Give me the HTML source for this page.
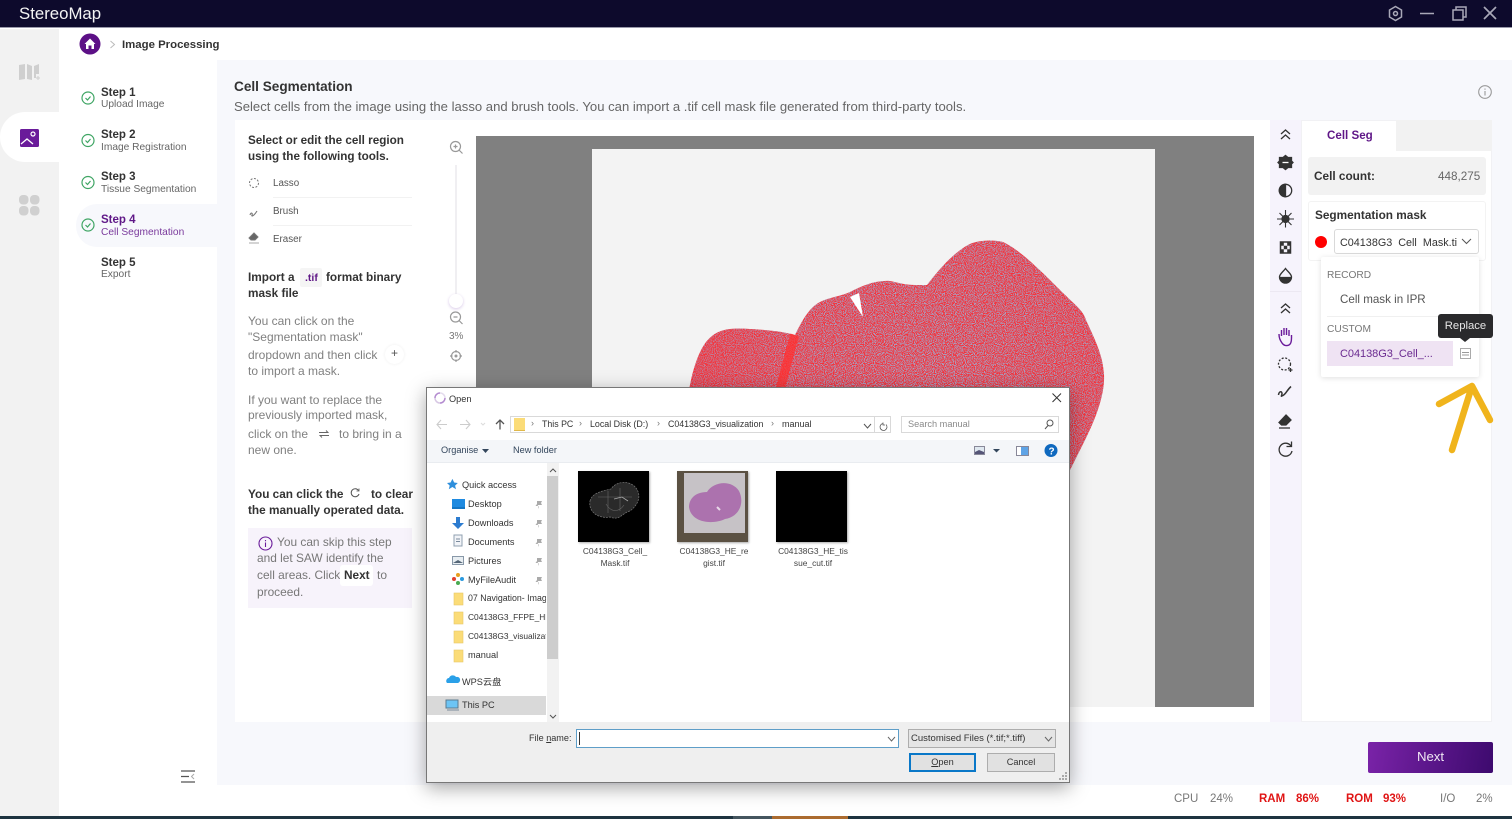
<!DOCTYPE html>
<html><head><meta charset="utf-8"><style>
*{box-sizing:border-box;margin:0;padding:0}
html,body{width:1512px;height:819px;overflow:hidden;background:#fff;font-family:"Liberation Sans","Noto Sans CJK SC",sans-serif;color:#333}
.a{position:absolute;white-space:nowrap}
svg{position:absolute;overflow:visible}
.b{font-weight:bold;color:#333}
.g{color:#808080}
.step{font-size:11.5px;font-weight:bold;color:#333}
.sub{font-size:10.2px;color:#666}
.d{font-size:9.2px;color:#333;margin-top:1px}
.nav{font-size:9px;color:#333}
.t{font-size:11.8px;font-weight:bold;color:#333}
.p{font-size:12px;color:#808080}
</style></head><body>
<!-- title bar -->
<div class="a" style="left:0;top:0;width:1512px;height:28px;background:#0d0a2c;border-bottom:1px solid #99a"></div>
<div class="a" style="left:19px;top:4px;font-size:16.800px;color:#f4f4f4">StereoMap</div>
<svg style="left:1388px;top:5px" width="115" height="17" fill="none" stroke="#a9a8b8" stroke-width="1.5">
<path d="M7.500 1.500 13.500 5v7l-6 3.500L1.500 12V5z"/><circle cx="7.500" cy="8.500" r="2"/>
<path d="M32 8.500H46M65 5V15H75V5zM68 5V2H78V12H75"/><path d="M96 2 108 14M108 2 96 14" stroke-width="1.700"/></svg>
<!-- sidebar -->
<div class="a" style="left:0;top:29px;width:59px;height:787px;background:#f2f2f2"></div>
<div class="a" style="left:0;top:112px;width:59px;height:50px;background:#fff;border-radius:25px 0 0 25px"></div>
<svg style="left:18px;top:63px" width="24" height="18"><path d="M1 2 7 1V16L1 17zM9 1 14 3V17L9 16zM16 3 21 1V11H18V15H16z" fill="#cfcfcf"/><path d="M20 13V17M18 15H22" stroke="#cfcfcf"/></svg>
<svg style="left:20px;top:129px" width="19" height="19"><rect width="19" height="18" rx="1.500" fill="#6a1b9a"/><circle cx="13" cy="5" r="2" fill="none" stroke="#fff" stroke-width="1.200"/><path d="M1 15 7 10 13 15" fill="none" stroke="#fff" stroke-width="1.300"/></svg>
<svg style="left:19px;top:195px" width="21" height="21" fill="#d0d0d0"><rect width="9.500" height="9.500" rx="4"/><rect x="11" width="9.500" height="9.500" rx="4"/><rect y="11" width="9.500" height="9.500" rx="4"/><rect x="11" y="11" width="9.500" height="9.500" rx="4"/></svg>
<!-- breadcrumb -->
<svg style="left:79px;top:33px" width="22" height="22"><circle cx="11" cy="11" r="10.500" fill="#5c1086"/><path d="M5.500 11 11 5.500 16.500 11H15V16H12.500V12.500H9.500V16H7V11z" fill="#fff"/></svg>
<svg style="left:109px;top:40px" width="8" height="9"><path d="M1.500 1 5.500 4.500 1.500 8" stroke="#bbb" fill="none"/></svg>
<div class="a b" style="left:122px;top:39px;font-size:11.400px;color:#333">Image Processing</div>
<!-- main bg -->
<div class="a" style="left:217px;top:60px;width:1295px;height:725px;background:#f7f8fc"></div>
<!-- steps -->
<div class="a" style="left:76px;top:204px;width:141px;height:43px;background:#f7f8fc;border-radius:21px 0 0 21px"></div>
<svg style="left:81px;top:90px" width="14" height="142" fill="none" stroke="#3fa564" stroke-width="1.200">
<circle cx="7" cy="8" r="6"/><path d="M4.500 8 6.500 10 9.500 6.500"/>
<circle cx="7" cy="50.500" r="6"/><path d="M4.500 50.500 6.500 52.500 9.500 49"/>
<circle cx="7" cy="92.500" r="6"/><path d="M4.500 92.500 6.500 94.500 9.500 91"/>
<circle cx="7" cy="135" r="6"/><path d="M4.500 135 6.500 137 9.500 133.500"/></svg>
<div class="a step" style="left:101px;top:87px">Step 1</div><div class="a sub" style="left:101px;top:99px">Upload Image</div>
<div class="a step" style="left:101px;top:129px">Step 2</div><div class="a sub" style="left:101px;top:142px">Image Registration</div>
<div class="a step" style="left:101px;top:171px">Step 3</div><div class="a sub" style="left:101px;top:184px">Tissue Segmentation</div>
<div class="a step" style="left:101px;top:214px;color:#5f1787">Step 4</div><div class="a sub" style="left:101px;top:227px;color:#7a3a9c">Cell Segmentation</div>
<div class="a step" style="left:101px;top:257px">Step 5</div><div class="a sub" style="left:101px;top:269px">Export</div>
<svg style="left:180px;top:770px" width="15" height="13"><path d="M1 1H15M1 6.500H9M1 12H15" stroke="#555" stroke-width="1.300"/><path d="M14 4 11.500 6.500 14 9" stroke="#aaa" fill="none"/></svg>
<!-- heading -->
<div class="a b" style="left:234px;top:79px;font-size:13.600px;color:#333">Cell Segmentation</div>
<div class="a" style="left:234px;top:99px;font-size:13.100px;color:#666">Select cells from the image using the lasso and brush tools. You can import a .tif cell mask file generated from third-party tools.</div>
<svg style="left:1478px;top:85px" width="14" height="14" fill="none" stroke="#999" stroke-width="1.100"><circle cx="7" cy="7" r="6.300"/><path d="M7 6V10.500M7 3.500V4.800"/></svg>
<!-- left card -->
<div class="a" style="left:235px;top:120px;width:189px;height:602px;background:#fff"></div>
<div class="a t" style="left:248px;top:133px;line-height:16px;font-size:11.700px">Select or edit the cell region<br>using the following tools.</div>
<svg style="left:248px;top:177px" width="13" height="68" fill="none" stroke="#777" stroke-width="1">
<circle cx="6" cy="6" r="4.500" stroke-dasharray="2 1.500"/><path d="M2 38C3 35 5 36 4 38S6 39 9 34" stroke-width="1.100"/><path d="M6 56 10 60 7 63H3L1 61z" fill="#666"/><path d="M1 66H11" stroke="#aaa"/></svg>
<div class="a" style="left:273px;top:178px;font-size:9.800px;color:#555">Lasso</div>
<div class="a" style="left:273px;top:206px;font-size:9.800px;color:#555">Brush</div>
<div class="a" style="left:273px;top:234px;font-size:9.800px;color:#555">Eraser</div>
<div class="a" style="left:273px;top:197px;width:139px;height:1px;background:#f2f2f2"></div>
<div class="a" style="left:273px;top:225px;width:139px;height:1px;background:#f2f2f2"></div>
<div class="a t" style="left:248px;top:270px">Import a</div>
<div class="a" style="left:300px;top:268px;width:22px;height:19px;background:#f5f5f5;border-radius:2px"></div>
<div class="a b" style="left:305px;top:272px;font-size:10.500px;color:#5f1787">.tif</div>
<div class="a t" style="left:326px;top:270px">format binary</div>
<div class="a t" style="left:248px;top:286px">mask file</div>
<div class="a p" style="left:248px;top:314px">You can click on the</div>
<div class="a p" style="left:248px;top:330px">"Segmentation mask"</div>
<div class="a p" style="left:248px;top:348px">dropdown and then click</div>
<div class="a" style="left:385px;top:345px;width:19px;height:19px;border-radius:50%;background:#fff;box-shadow:0 0 3px #eee;text-align:center;font-size:12px;line-height:17px;color:#555">+</div>
<div class="a p" style="left:248px;top:364px">to import a mask.</div>
<div class="a p" style="left:248px;top:393px">If you want to replace the</div>
<div class="a p" style="left:248px;top:408px">previously imported mask,</div>
<div class="a p" style="left:248px;top:427px">click on the</div>
<svg style="left:319px;top:430px" width="10" height="8"><path d="M0 2.500H9L7 .5M10 5.500H1L3 7.500" stroke="#666" fill="none" stroke-width=".9"/></svg>
<div class="a p" style="left:339px;top:427px">to bring in a</div>
<div class="a p" style="left:248px;top:443px">new one.</div>
<div class="a t" style="left:248px;top:487px">You can click the</div>
<svg style="left:350px;top:488px" width="10" height="10" fill="none" stroke="#555"><path d="M8.500 2.500A4 4 0 1 0 9 6"/><path d="M9 .5V3H6.500" stroke-width=".8"/></svg>
<div class="a t" style="left:371px;top:487px">to clear</div>
<div class="a t" style="left:248px;top:503px">the manually operated data.</div>
<div class="a" style="left:248px;top:528px;width:164px;height:80px;background:#f7f3fb"></div>
<svg style="left:258px;top:536px" width="15" height="15" fill="none" stroke="#6a1b9a" stroke-width="1.100"><circle cx="7.500" cy="7.500" r="6.500"/><path d="M7.500 6.500V11M7.500 4V5.300"/></svg>
<div class="a p" style="left:277px;top:535px;color:#777;font-size:11.900px">You can skip this step</div>
<div class="a p" style="left:257px;top:551px;color:#777;font-size:11.900px">and let SAW identify the</div>
<div class="a p" style="left:257px;top:568px;color:#777;font-size:11.900px">cell areas. Click</div>
<div class="a" style="left:340px;top:565px;width:33px;height:21px;background:#fff;border-radius:3px"></div>
<div class="a t" style="left:344px;top:568px">Next</div>
<div class="a p" style="left:377px;top:568px;color:#777">to</div>
<div class="a p" style="left:257px;top:585px;color:#777;font-size:11.900px">proceed.</div>
<!-- viewer -->
<div class="a" style="left:424px;top:120px;width:846px;height:602px;background:#fff"></div>
<svg style="left:449px;top:140px" width="16" height="225" fill="none" stroke="#999" stroke-width="1.200">
<circle cx="6.500" cy="6.500" r="5"/><path d="M10 10 13.500 13.500M4.500 6.500H8.500M6.500 4.500V8.500"/>
<path d="M7 25V160" stroke="#f0eff2" stroke-width="2"/>
<circle cx="6.500" cy="177" r="5"/><path d="M10 180.500 13.500 184M4.500 177H8.500"/>
<circle cx="7" cy="216" r="4.500"/><circle cx="7" cy="216" r="1.500" fill="#999" stroke="none"/><path d="M7 210V212.500M7 219.500V222M1 216H3.500M10.500 216H13"/></svg>
<div class="a" style="left:449px;top:294px;width:14px;height:14px;border-radius:50%;background:#fff;box-shadow:0 1px 3px #d8c8e8"></div>
<div class="a" style="left:449px;top:331px;font-size:10px;color:#777">3%</div>
<div class="a" style="left:476px;top:136px;width:778px;height:571px;background:#808080"></div>
<div class="a" style="left:592px;top:149px;width:563px;height:558px;background:#f3f3f3"></div>
<svg style="left:0;top:0" width="1512" height="819">
<defs>
<filter id="n" x="0" y="0" width="100%" height="100%"><feTurbulence type="fractalNoise" baseFrequency="1.100" numOctaves="1" seed="7"/><feColorMatrix values="0 0 0 0 0.36 0 0 0 0 0.38 0 0 0 0 0.58 0 0 0 10 -4.700"/><feComposite in2="SourceGraphic" operator="in"/></filter>
<radialGradient id="m" gradientUnits="userSpaceOnUse" cx="930" cy="370" r="240"><stop offset="0" stop-color="#fff"/><stop offset=".6" stop-color="#ddd"/><stop offset="1" stop-color="#999"/></radialGradient>
<mask id="mk"><rect width="1512" height="819" fill="url(#m)"/></mask>
<path id="tp" d="M689 390C693 368 700 345 712 336 722 328 735 328 750 329 770 330 785 332 795 335 800 325 808 308 820 302 830 297 842 296 850 292 862 286 875 280 890 281 900 283 905 285 915 285L927 285C935 275 950 255 968 245 975 241 990 239 1003 242 1020 250 1040 270 1060 290 1075 305 1083 310 1086 320 1095 340 1103 355 1104 375 1105 395 1095 420 1085 440L1070 470H689Z"/>
</defs>
<use href="#tp" fill="#f5333b"/>
<g mask="url(#mk)"><use href="#tp" fill="#000" filter="url(#n)"/></g>
<path d="M795 335C790 350 785 370 780 390" stroke="#ff3030" stroke-width="9" fill="none" opacity=".75"/>
<path d="M850 297 859 293 863 317z" fill="#fff"/>
</svg>
<!-- toolbar -->
<div class="a" style="left:1270px;top:120px;width:31px;height:602px;background:#f6f3fc"></div>
<div class="a" style="left:1270px;top:291px;width:31px;height:1px;background:#ece8f2"></div>
<svg style="left:1276px;top:126px" width="20" height="335" fill="none" stroke="#333" stroke-width="1.300">
<path d="M5 8 9.500 4 14 8M5 13 9.500 9 14 13"/>
<path d="M9.500 29.500 12 31.500H15.500V35L17 36.500 15.500 38V41.500H12L9.500 43.500 7 41.500H3.500V38L2 36.500 3.500 35V31.500H7z" fill="#333"/><path d="M6.500 36.500H12.500" stroke="#fff"/>
<circle cx="9.500" cy="64.500" r="6.200"/><path d="M9.500 58.300A6.200 6.200 0 0 0 9.500 70.700z" fill="#333"/>
<circle cx="9.500" cy="93" r="3.500" fill="#333"/><path d="M9.500 84V101.500M1 93H18M3.500 87 15.500 99M15.500 87 3.500 99" stroke-width="1.100"/>
<path d="M4.500 116H14.500V127H4.500z" stroke-width="1.500"/><path d="M4.500 116h3.300v3.700H4.500zM11.200 116h3.300v3.700h-3.300zM7.800 119.700h3.400v3.600H7.800zM4.500 123.300h3.300V127H4.500zM11.200 123.300h3.300V127h-3.300z" fill="#333" stroke="none"/>
<path d="M9.500 142.500C12 146 15.500 148 15.500 151A6 6 0 0 1 3.500 151C3.500 148 7 146 9.500 142.500z"/><path d="M4 151.500H15A5.500 5.500 0 0 1 4 151.500z" fill="#333"/>
<path d="M5 182 9.500 178 14 182M5 187 9.500 183 14 187"/>
<path d="M5.500 210V204M8 209V202M10.500 209V202M13 210V204M3 208C3 212 4 214 6 217 8 220 11 220 13 219 15 218 15.500 215 15.500 212V209" stroke="#6a1b9a" stroke-width="1.400"/>
<circle cx="8.500" cy="238" r="6" stroke-dasharray="2 1.600"/><path d="M14.500 242V246M12.500 244H16.500"/>
<path d="M2.500 269C3 265 6 265 6 267.500S4 271 7 269.500 11 264 15 260.500" stroke-width="1.500"/>
<path d="M10 289 15 294 10 299H5.500L3 296.500z" fill="#333"/><path d="M3 302H14"/>
<path d="M15 320A6.500 6.500 0 1 0 16 325"/><path d="M15.500 315.500V320.500H10.500"/>
</svg>
<!-- right panel -->
<div class="a" style="left:1301px;top:120px;width:191px;height:602px;background:#fff;border:1px solid #f1f1f4"></div>
<div class="a" style="left:1396px;top:120px;width:96px;height:31px;background:#f2f2f2"></div>
<div class="a b" style="left:1327px;top:129px;font-size:11.600px;color:#5f1787">Cell Seg</div>
<div class="a" style="left:1308px;top:157px;width:178px;height:38px;background:#f2f2f2;border-radius:3px"></div>
<div class="a t" style="left:1314px;top:169px">Cell count:</div>
<div class="a" style="left:1438px;top:170px;font-size:11.700px;color:#666">448,275</div>
<div class="a" style="left:1308px;top:201px;width:178px;height:60px;background:#fff;border:1px solid #f3f3f3;border-radius:3px"></div>
<div class="a t" style="left:1315px;top:208px">Segmentation mask</div>
<div class="a" style="left:1315px;top:236px;width:12px;height:12px;border-radius:50%;background:#f00"></div>
<div class="a" style="left:1334px;top:229px;width:145px;height:25px;background:#fff;border:1px solid #d9d9d9;border-radius:3px"></div>
<div class="a" style="left:1340px;top:237px;font-size:10.800px;color:#333;width:117px;overflow:hidden;word-spacing:3px">C04138G3 Cell Mask.tif</div>
<svg style="left:1461px;top:238px" width="11" height="7"><path d="M1 1 5.500 5.500 10 1" stroke="#555" fill="none"/></svg>
<div class="a" style="left:1321px;top:257px;width:158px;height:120px;background:#fff;box-shadow:0 1px 6px rgba(0,0,0,.13);border-radius:2px"></div>
<div class="a" style="left:1327px;top:270px;font-size:10.200px;color:#777">RECORD</div>
<div class="a" style="left:1340px;top:293px;font-size:11.600px;color:#555">Cell mask in IPR</div>
<div class="a" style="left:1327px;top:316px;width:142px;height:1px;background:#f0f0f0"></div>
<div class="a" style="left:1327px;top:324px;font-size:10.200px;color:#777">CUSTOM</div>
<div class="a" style="left:1327px;top:341px;width:126px;height:25px;background:#efe3f3"></div>
<div class="a" style="left:1340px;top:348px;font-size:11px;letter-spacing:-.05px;color:#6a2a90">C04138G3_Cell_...</div>
<div class="a" style="left:1460px;top:348px;width:11px;height:11px;border:1px solid #aaa"></div>
<svg style="left:1462px;top:351px" width="7" height="6"><path d="M0 1.500H7M0 4H7" stroke="#999"/></svg>
<div class="a" style="left:1438px;top:314px;width:55px;height:24px;background:#2a2a2c;border-radius:3px;color:#e6e6e6;font-size:11.300px;line-height:24px;text-align:center">Replace</div>
<svg style="left:1460px;top:338px" width="10" height="5"><path d="M0 0H10L5 4z" fill="#2a2a2c"/></svg>
<svg style="left:0;top:0" width="1512" height="819" fill="none" stroke="#f0b41c" stroke-width="6.500" stroke-linecap="round" stroke-linejoin="round"><path d="M1439 404 1472 386 1490 420M1472 386 1452 450"/></svg>
<!-- Next & status -->
<div class="a" style="left:1368px;top:742px;width:125px;height:31px;background:linear-gradient(100deg,#7a23a8,#3d0a6e);border-radius:2px;color:#f0e8f4;font-size:13.200px;line-height:30px;text-align:center">Next</div>
<div class="a" style="left:1174px;top:793px;font-size:11.500px;color:#777">CPU</div>
<div class="a" style="left:1210px;top:793px;font-size:11.500px;color:#777">24%</div>
<div class="a b" style="left:1259px;top:793px;font-size:11.500px;color:#e01515">RAM</div>
<div class="a b" style="left:1296px;top:793px;font-size:11.500px;color:#e01515">86%</div>
<div class="a b" style="left:1346px;top:793px;font-size:11.500px;color:#e01515">ROM</div>
<div class="a b" style="left:1383px;top:793px;font-size:11.500px;color:#e01515">93%</div>
<div class="a" style="left:1440px;top:793px;font-size:11.500px;color:#777">I/O</div>
<div class="a" style="left:1476px;top:793px;font-size:11.500px;color:#777">2%</div>
<!-- taskbar strip -->
<div class="a" style="left:0;top:816px;width:1512px;height:3px;background:#1e3440"></div>
<div class="a" style="left:733px;top:816px;width:39px;height:3px;background:#45565f"></div>
<div class="a" style="left:772px;top:816px;width:76px;height:3px;background:#ac6c30"></div>
<!-- dialog -->
<div class="a" style="left:426px;top:387px;width:644px;height:396px;background:#fff;border:1px solid #777;box-shadow:0 5px 18px rgba(0,0,0,.35)"></div>
<svg style="left:434px;top:392px" width="12" height="12" fill="none" stroke-width="1.500"><path d="M6 1A5 5 0 0 0 1 6" stroke="#b48cd0"/><path d="M1 6A5 5 0 0 0 6 11" stroke="#d8c8e4"/><path d="M6 11A5 5 0 0 0 11 6" stroke="#b48cd0"/><path d="M11 6A5 5 0 0 0 6 1" stroke="#e4dced"/></svg>
<div class="a d" style="left:449px;top:393px">Open</div>
<svg style="left:1052px;top:393px" width="10" height="10"><path d="M.5 .5 9 9M9 .5 .5 9" stroke="#333"/></svg>
<svg style="left:436px;top:418px" width="70" height="13" fill="none" stroke="#ccc" stroke-width="1.100"><path d="M1 6.500H11M5 2 1 6.500 5 11M24 6.500H34M30 2 34 6.500 30 11"/><path d="M45 5 47 7 49 5" stroke="#ddd"/><path d="M64 11.500V2.500M60 6 64 2 68 6" stroke="#555" stroke-width="1.300"/></svg>
<div class="a" style="left:510px;top:416px;width:365px;height:17px;background:#fff;border:1px solid #d9d9d9"></div>
<div class="a" style="left:875px;top:416px;width:16px;height:17px;background:#fff;border:1px solid #d9d9d9;border-left:0"></div>
<div class="a" style="left:514px;top:418px;width:11px;height:13px;background:#fbdc78;border-bottom:1px solid #e0b84a"></div>
<div class="a nav" style="left:531px;top:418px;color:#777">›</div>
<div class="a nav" style="left:542px;top:419px;font-size:8.800px">This PC</div>
<div class="a nav" style="left:579px;top:418px;color:#777">›</div>
<div class="a nav" style="left:590px;top:419px;font-size:8.900px">Local Disk (D:)</div>
<div class="a nav" style="left:657px;top:418px;color:#777">›</div>
<div class="a nav" style="left:668px;top:419px;font-size:8.800px">C04138G3_visualization</div>
<div class="a nav" style="left:771px;top:418px;color:#777">›</div>
<div class="a nav" style="left:782px;top:419px">manual</div>
<svg style="left:863px;top:422px" width="26" height="10" fill="none" stroke="#555"><path d="M1 2 4.500 6 8 2"/><path d="M20 1.500A3.500 3.500 0 1 0 23 2.500M20 .5V3H22" stroke-width=".8"/></svg>
<div class="a" style="left:901px;top:416px;width:158px;height:17px;background:#fff;border:1px solid #d9d9d9"></div>
<div class="a" style="left:908px;top:419px;font-size:9.200px;color:#8a8a8a">Search manual</div>
<svg style="left:1044px;top:419px" width="10" height="11" fill="none" stroke="#555"><circle cx="6" cy="4" r="3"/><path d="M4 6.500 1 10"/></svg>
<div class="a" style="left:427px;top:440px;width:642px;height:23px;background:#f4f6f9;border-bottom:1px solid #e9ecf0"></div>
<div class="a" style="left:441px;top:445px;font-size:9.200px;color:#33465c">Organise</div>
<svg style="left:482px;top:449px" width="7" height="4"><path d="M0 0H7L3.500 4z" fill="#33465c"/></svg>
<div class="a" style="left:513px;top:445px;font-size:9.200px;color:#33465c">New folder</div>
<svg style="left:974px;top:444px" width="78" height="14"><rect x=".5" y="2.500" width="10" height="8" fill="#dfe8f0" stroke="#889"/><path d="M1 8 5 6 10 8V10H1z" fill="#557"/><path d="M19 5H26L22.500 8.500z" fill="#33465c"/><rect x="42.500" y="2.500" width="12" height="9" fill="#fff" stroke="#889"/><rect x="47" y="3" width="7" height="8" fill="#5fa4e6"/><circle cx="77" cy="6.500" r="6.500" fill="#0f69bf"/><text x="74.500" y="10.500" font-size="10" font-weight="bold" fill="#fff" font-family="Liberation Sans">?</text></svg>
<!-- tree -->
<div class="a" style="left:427px;top:696px;width:119px;height:19px;background:#d9d9d9"></div>
<div class="a" style="left:547px;top:463px;width:12px;height:259px;background:#f2f2f2"></div>
<div class="a" style="left:547px;top:476px;width:11px;height:183px;background:#cdcdcd"></div>
<svg style="left:549px;top:467px" width="8" height="253" fill="none" stroke="#555"><path d="M1 5 4 2 7 5M1 248 4 251 7 248"/></svg>
<svg style="left:447px;top:478px" width="110" height="240">
<path d="M6 1 8 5 12 5.500 9 8.500 10 12.500 6 10 2 12.500 3 8.500 0 5.500 4 5z" fill="#2f8fdc" transform="scale(.9)"/>
<rect x="5" y="21" width="13" height="10" fill="#1e8ae0"/><path d="M5 30H18" stroke="#0b62a8"/>
<path d="M9 39H13V45H17L11 51 5 45H9z" fill="#2c7cd0"/>
<rect x="7" y="57" width="8" height="11" fill="#f2f4f8" stroke="#90a0b0"/><path d="M9 61H13M9 63.500H13" stroke="#7a8a9c"/>
<rect x="5.500" y="78.500" width="11" height="8" fill="#e8eef2" stroke="#8898a8"/><path d="M6 85 11 82 16 85z" fill="#567"/>
<circle cx="11" cy="97" r="2" fill="#e8a020"/><circle cx="7" cy="101" r="2" fill="#e04030"/><circle cx="15" cy="101" r="2" fill="#2a9adf"/><circle cx="11" cy="105" r="2" fill="#4aaa50"/>
<g fill="#fbdc78" stroke="#e8c868" stroke-width=".6"><rect x="7" y="115" width="9" height="12"/><rect x="7" y="134" width="9" height="12"/><rect x="7" y="153" width="9" height="12"/><rect x="7" y="172" width="9" height="12"/></g>
<path d="M0 205A3 3 0 0 1 2 200 4 4 0 0 1 9 199 3 3 0 0 1 11 205z" fill="#2aa0e8"/>
<rect x="-1" y="222" width="12" height="8" fill="#6cc4f4" stroke="#5a7a90"/><path d="M0 232H12" stroke="#7a8a9c"/>
<g fill="#aaa"><path d="M90 23H95L94 25 95 27H90.500L92 29V31L91 28H88.500L90 26z"/><path d="M90 42H95L94 44 95 46H90.500L92 48V50L91 47H88.500L90 45z"/><path d="M90 61H95L94 63 95 65H90.500L92 67V69L91 66H88.500L90 64z"/><path d="M90 80H95L94 82 95 84H90.500L92 86V88L91 85H88.500L90 83z"/><path d="M90 99H95L94 101 95 103H90.500L92 105V107L91 104H88.500L90 102z"/></g>
</svg>
<div class="a d" style="left:462px;top:479px">Quick access</div>
<div class="a d" style="left:468px;top:498px">Desktop</div>
<div class="a d" style="left:468px;top:517px">Downloads</div>
<div class="a d" style="left:468px;top:536px">Documents</div>
<div class="a d" style="left:468px;top:555px">Pictures</div>
<div class="a d" style="left:468px;top:574px">MyFileAudit</div>
<div class="a d" style="left:468px;top:592px;width:78px;overflow:hidden;font-size:8.800px">07 Navigation- Image</div>
<div class="a d" style="left:468px;top:611px;width:78px;overflow:hidden;font-size:8.400px">C04138G3_FFPE_HE</div>
<div class="a d" style="left:468px;top:630px;width:78px;overflow:hidden;font-size:8.400px">C04138G3_visualization</div>
<div class="a d" style="left:468px;top:649px">manual</div>
<div class="a d" style="left:462px;top:673px">WPS云盘</div>
<div class="a d" style="left:462px;top:699px">This PC</div>
<!-- files -->
<div class="a" style="left:578px;top:471px;width:71px;height:71px;background:#000;box-shadow:1px 1px 2px #aaa"></div>
<svg style="left:578px;top:471px" width="71" height="71"><path d="M12 30C14 22 24 20 33 18 38 10 52 9 58 17 64 25 60 34 52 40 44 42 42 50 32 46 22 48 10 42 12 30z" fill="#2a2a2a" stroke="#777" stroke-width=".7" stroke-dasharray="2 1"/><path d="M28 33C34 43 42 40 46 34M20 26H54M30 20V42M42 17V40" stroke="#666" fill="none" stroke-width=".6"/><path d="M36 28 44 26 50 30" stroke="#aaa" fill="none" stroke-width=".8"/></svg>
<div class="a" style="left:677px;top:471px;width:71px;height:71px;background:#5b5143;box-shadow:1px 1px 2px #aaa"></div>
<div class="a" style="left:684px;top:473px;width:61px;height:60px;background:#c6c2c6"></div>
<svg style="left:677px;top:471px" width="71" height="71"><path d="M12 36C12 28 18 21 30 21 36 11 54 8 62 20 68 32 62 46 48 48 36 54 14 52 12 36z" fill="#ac72ae"/><path d="M40 36 43 39" stroke="#e8d8e8" stroke-width="2"/></svg>
<div class="a" style="left:776px;top:471px;width:71px;height:71px;background:#000;box-shadow:1px 1px 2px #aaa"></div>
<div class="a d" style="left:570px;top:544px;width:90px;text-align:center;line-height:12px;color:#444;font-size:8.400px">C04138G3_Cell_<br>Mask.tif</div>
<div class="a d" style="left:669px;top:544px;width:90px;text-align:center;line-height:12px;color:#444;font-size:8.400px">C04138G3_HE_re<br>gist.tif</div>
<div class="a d" style="left:768px;top:544px;width:90px;text-align:center;line-height:12px;color:#444;font-size:8.400px">C04138G3_HE_tis<br>sue_cut.tif</div>
<!-- bottom -->
<div class="a" style="left:427px;top:722px;width:642px;height:60px;background:#efefef"></div>
<div class="a d" style="left:529px;top:732px;font-size:9.100px">File <u>n</u>ame:</div>
<div class="a" style="left:576px;top:729px;width:323px;height:19px;background:#fff;border:1px solid #5e9ec8"></div>
<div class="a" style="left:579px;top:732px;width:1px;height:13px;background:#333"></div>
<svg style="left:887px;top:736px" width="9" height="6"><path d="M1 1 4.500 5 8 1" stroke="#666" fill="none"/></svg>
<div class="a" style="left:908px;top:729px;width:148px;height:19px;background:#e5e5e5;border:1px solid #adadad"></div>
<div class="a d" style="left:911px;top:732px;font-size:9.500px">Customised Files (*.tif;*.tiff)</div>
<svg style="left:1044px;top:736px" width="9" height="6"><path d="M1 1 4.500 5 8 1" stroke="#666" fill="none"/></svg>
<div class="a" style="left:909px;top:753px;width:67px;height:19px;background:#e1e1e1;border:2px solid #0a78c8;text-align:center;line-height:15px;font-size:9.200px"><u>O</u>pen</div>
<div class="a" style="left:987px;top:753px;width:68px;height:19px;background:#e1e1e1;border:1px solid #adadad;text-align:center;line-height:17px;font-size:9.200px">Cancel</div>
<svg style="left:1059px;top:772px" width="9" height="9" fill="#aaa"><rect x="6" y="0" width="2" height="2"/><rect x="3" y="3" width="2" height="2"/><rect x="6" y="3" width="2" height="2"/><rect x="0" y="6" width="2" height="2"/><rect x="3" y="6" width="2" height="2"/><rect x="6" y="6" width="2" height="2"/></svg>
</body></html>
